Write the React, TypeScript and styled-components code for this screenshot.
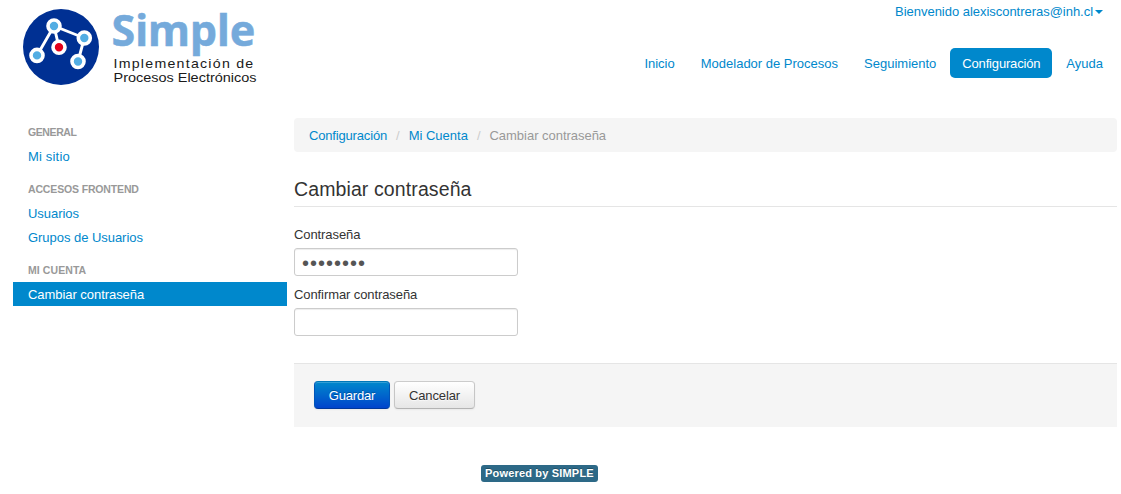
import React from 'react';
import styled, { createGlobalStyle } from 'styled-components';

const GlobalStyle = createGlobalStyle`
  * { box-sizing: border-box; }
  body {
    margin: 0;
    background: #fff;
    color: #333;
    font: 13px/18px Arial, "Liberation Sans", sans-serif;
  }
  ul, ol { list-style: none; margin: 0; padding: 0; }
  a { color: #08c; text-decoration: none; }
`;

const Page = styled.div`
  width: 1121px;
  height: 494px;
  display: flex;
  flex-direction: column;
`;

const Header = styled.header`
  display: flex;
  justify-content: space-between;
  height: 118px;
  padding: 0 6px 0 20px;
`;

const Logo = styled.svg`
  display: block;
  flex: none;
  overflow: visible;
`;

const HeaderRight = styled.div`
  display: flex;
  flex-direction: column;
  align-items: flex-end;
  padding-top: 3px;
`;

const UserMenu = styled.a`
  display: flex;
  align-items: center;
  padding-right: 12px;
  white-space: nowrap;
  letter-spacing: -0.03px;
`;

const Caret = styled.span`
  width: 0;
  height: 0;
  margin-left: 2px;
  border: 4px solid transparent;
  border-top-color: #08c;
  border-bottom: 0;
`;

const Nav = styled.nav`
  display: flex;
  gap: 2px;
  margin-top: 27px;
`;

const NavLink = styled.a<{ $active?: boolean; $tracking?: number }>`
  padding: 7px 12px 5px;
  border-radius: 5px;
  white-space: nowrap;
  letter-spacing: ${(p) => p.$tracking ?? 0}px;
  color: ${(p) => (p.$active ? '#fff' : '#08c')};
  background: ${(p) => (p.$active ? '#08c' : 'transparent')};
`;

const Columns = styled.div`
  display: flex;
  gap: 7px;
  padding: 0 4px 0 13px;
`;

const Sidebar = styled.aside`
  width: 274px;
  flex: none;
  padding-top: 2px;
`;

const Group = styled.section`
  margin-bottom: 9px;
`;

const GroupTitle = styled.h2<{ $tracking: number }>`
  margin: 0;
  padding: 3px 15px;
  color: #999;
  font-size: 10.5px;
  line-height: 18px;
  font-weight: bold;
  text-transform: uppercase;
  letter-spacing: ${(p) => p.$tracking}px;
`;

const SideLink = styled.a<{ $active?: boolean; $tracking: number }>`
  display: block;
  padding: 4px 15px 2px;
  letter-spacing: ${(p) => p.$tracking}px;
  color: ${(p) => (p.$active ? '#fff' : '#08c')};
  background: ${(p) => (p.$active ? '#08c' : 'transparent')};
`;

const Main = styled.main`
  flex: 1;
`;

const Breadcrumb = styled.ol`
  display: flex;
  height: 34px;
  padding: 9px 15px 7px;
  border-radius: 4px;
  background: #f5f5f5;
`;

const Crumb = styled.li<{ $tracking?: number }>`
  color: #999;
  letter-spacing: ${(p) => p.$tracking ?? 0}px;
  &:not(:last-child)::after {
    content: '/';
    color: #ccc;
    letter-spacing: 0;
    padding: 0 9px;
  }
`;

const Title = styled.h1`
  height: 37px;
  margin: 18px 0;
  border-bottom: 1px solid #e5e5e5;
  font-size: 19.5px;
  line-height: 38px;
  font-weight: normal;
  letter-spacing: 0.11px;
`;

const Label = styled.label`
  display: block;
  padding-top: 1px;
  margin-bottom: 4px;
  letter-spacing: -0.09px;
`;

const Input = styled.input`
  display: block;
  width: 224px;
  height: 28px;
  margin: 0 0 9px;
  padding: 4px 7px 2px;
  border: 1px solid #ccc;
  border-radius: 3px;
  background: #fff;
  color: #555;
  font: 20px/20px Arial, "Liberation Sans", sans-serif;
  letter-spacing: 1px;
  box-shadow: inset 0 1px 1px rgba(0, 0, 0, 0.075);
  outline: none;
`;

const Actions = styled.div`
  display: flex;
  gap: 4px;
  height: 64px;
  margin-top: 27px;
  padding: 17px 20px 18px;
  border-top: 1px solid #e5e5e5;
  background: #f5f5f5;
`;

const Button = styled.button<{ $primary?: boolean }>`
  width: ${(p) => (p.$primary ? 76 : 81)}px;
  height: 28px;
  padding: 2px 0 0;
  border: 1px solid;
  border-radius: 4px;
  font: 13px/18px Arial, "Liberation Sans", sans-serif;
  letter-spacing: ${(p) => (p.$primary ? -0.2 : -0.1)}px;
  color: ${(p) => (p.$primary ? '#fff' : '#333')};
  text-shadow: ${(p) => (p.$primary ? '0 -1px 0 rgba(0,0,0,.25)' : '0 1px 1px rgba(255,255,255,.75)')};
  border-color: ${(p) => (p.$primary ? '#0077b8 #0055b8 #00379a' : '#ccc #c6c6c6 #b3b3b3')};
  background: ${(p) => (p.$primary ? 'linear-gradient(#08c, #04c)' : 'linear-gradient(#fff, #e6e6e6)')};
  box-shadow: inset 0 1px 0 rgba(255, 255, 255, 0.2), 0 1px 2px rgba(0, 0, 0, 0.05);
`;

const Footer = styled.footer`
  display: flex;
  padding: 38px 0 0 481px;
`;

const Badge = styled.a`
  height: 17px;
  padding: 0 4px;
  border-radius: 3px;
  background: #2d6987;
  color: #fff;
  font-size: 11px;
  line-height: 17px;
  font-weight: bold;
  white-space: nowrap;
  letter-spacing: 0.18px;
  text-shadow: 0 -1px 0 rgba(0, 0, 0, 0.25);
`;

const navItems = [
  { text: 'Inicio', tracking: 0 },
  { text: 'Modelador de Procesos', tracking: 0 },
  { text: 'Seguimiento', tracking: 0 },
  { text: 'Configuración', tracking: -0.17 },
  { text: 'Ayuda', tracking: 0 },
];

const groups = [
  { title: 'General', tracking: -0.4, links: [{ text: 'Mi sitio', tracking: 0.18 }] },
  {
    title: 'Accesos Frontend',
    tracking: -0.15,
    links: [
      { text: 'Usuarios', tracking: -0.05 },
      { text: 'Grupos de Usuarios', tracking: -0.04 },
    ],
  },
  { title: 'Mi Cuenta', tracking: 0.08, links: [{ text: 'Cambiar contraseña', tracking: -0.05 }] },
];

const nodes = [
  { x: 54, y: 26, fill: '#52ade3' },
  { x: 84.3, y: 38, fill: '#52ade3' },
  { x: 37, y: 55.4, fill: '#52ade3' },
  { x: 78, y: 61.5, fill: '#52ade3' },
  { x: 59, y: 47.3, fill: '#e2001a' },
];

function SimpleLogo() {
  return (
    <Logo width="240" height="90" viewBox="20 0 240 90" role="img" aria-label="Simple">
      <circle cx="61" cy="47" r="38" fill="#003093" />
      <path d="M37 55.4 54 26 84.3 38 78 61.5M54 26 59 47.3" fill="none" stroke="#fff" strokeWidth="2.9" />
      {nodes.map((n) => (
        <circle key={`${n.x}-${n.y}`} cx={n.x} cy={n.y} r="6" fill={n.fill} stroke="#fff" strokeWidth="3.6" />
      ))}
      <text x="111.5" y="46" fontFamily="'Noto Sans', sans-serif" fontWeight="700" fontSize="43" textLength="144" lengthAdjust="spacingAndGlyphs" fill="#75aadb" stroke="#75aadb" strokeWidth="0.5">Simple</text>
      <g fontFamily="Arial, 'Liberation Sans', sans-serif" fontSize="12.4" fill="#1a1a1a">
        <text x="113.5" y="68" textLength="141" lengthAdjust="spacingAndGlyphs" letterSpacing="1.1">Implementación de</text>
        <text x="113.5" y="82" textLength="143" lengthAdjust="spacingAndGlyphs">Procesos Electrónicos</text>
      </g>
    </Logo>
  );
}

export default function App() {
  return (
    <Page>
      <GlobalStyle />
      <Header>
        <SimpleLogo />
        <HeaderRight>
          <UserMenu href="#">
            Bienvenido alexiscontreras@inh.cl
            <Caret />
          </UserMenu>
          <Nav>
            {navItems.map((item) => (
              <NavLink key={item.text} href="#" $tracking={item.tracking} $active={item.text === 'Configuración'}>
                {item.text}
              </NavLink>
            ))}
          </Nav>
        </HeaderRight>
      </Header>
      <Columns>
        <Sidebar>
          {groups.map((g) => (
            <Group key={g.title}>
              <GroupTitle $tracking={g.tracking}>{g.title}</GroupTitle>
              {g.links.map((l) => (
                <SideLink key={l.text} href="#" $tracking={l.tracking} $active={l.text === 'Cambiar contraseña'}>
                  {l.text}
                </SideLink>
              ))}
            </Group>
          ))}
        </Sidebar>
        <Main>
          <Breadcrumb>
            <Crumb $tracking={-0.17}><a href="#">Configuración</a></Crumb>
            <Crumb><a href="#">Mi Cuenta</a></Crumb>
            <Crumb $tracking={-0.03}>Cambiar contraseña</Crumb>
          </Breadcrumb>
          <Title>Cambiar contraseña</Title>
          <Label htmlFor="password">Contraseña</Label>
          <Input id="password" type="password" defaultValue="12345678" />
          <Label htmlFor="confirm">Confirmar contraseña</Label>
          <Input id="confirm" type="password" />
          <Actions>
            <Button $primary>Guardar</Button>
            <Button>Cancelar</Button>
          </Actions>
        </Main>
      </Columns>
      <Footer>
        <Badge href="#">Powered by SIMPLE</Badge>
      </Footer>
    </Page>
  );
}
